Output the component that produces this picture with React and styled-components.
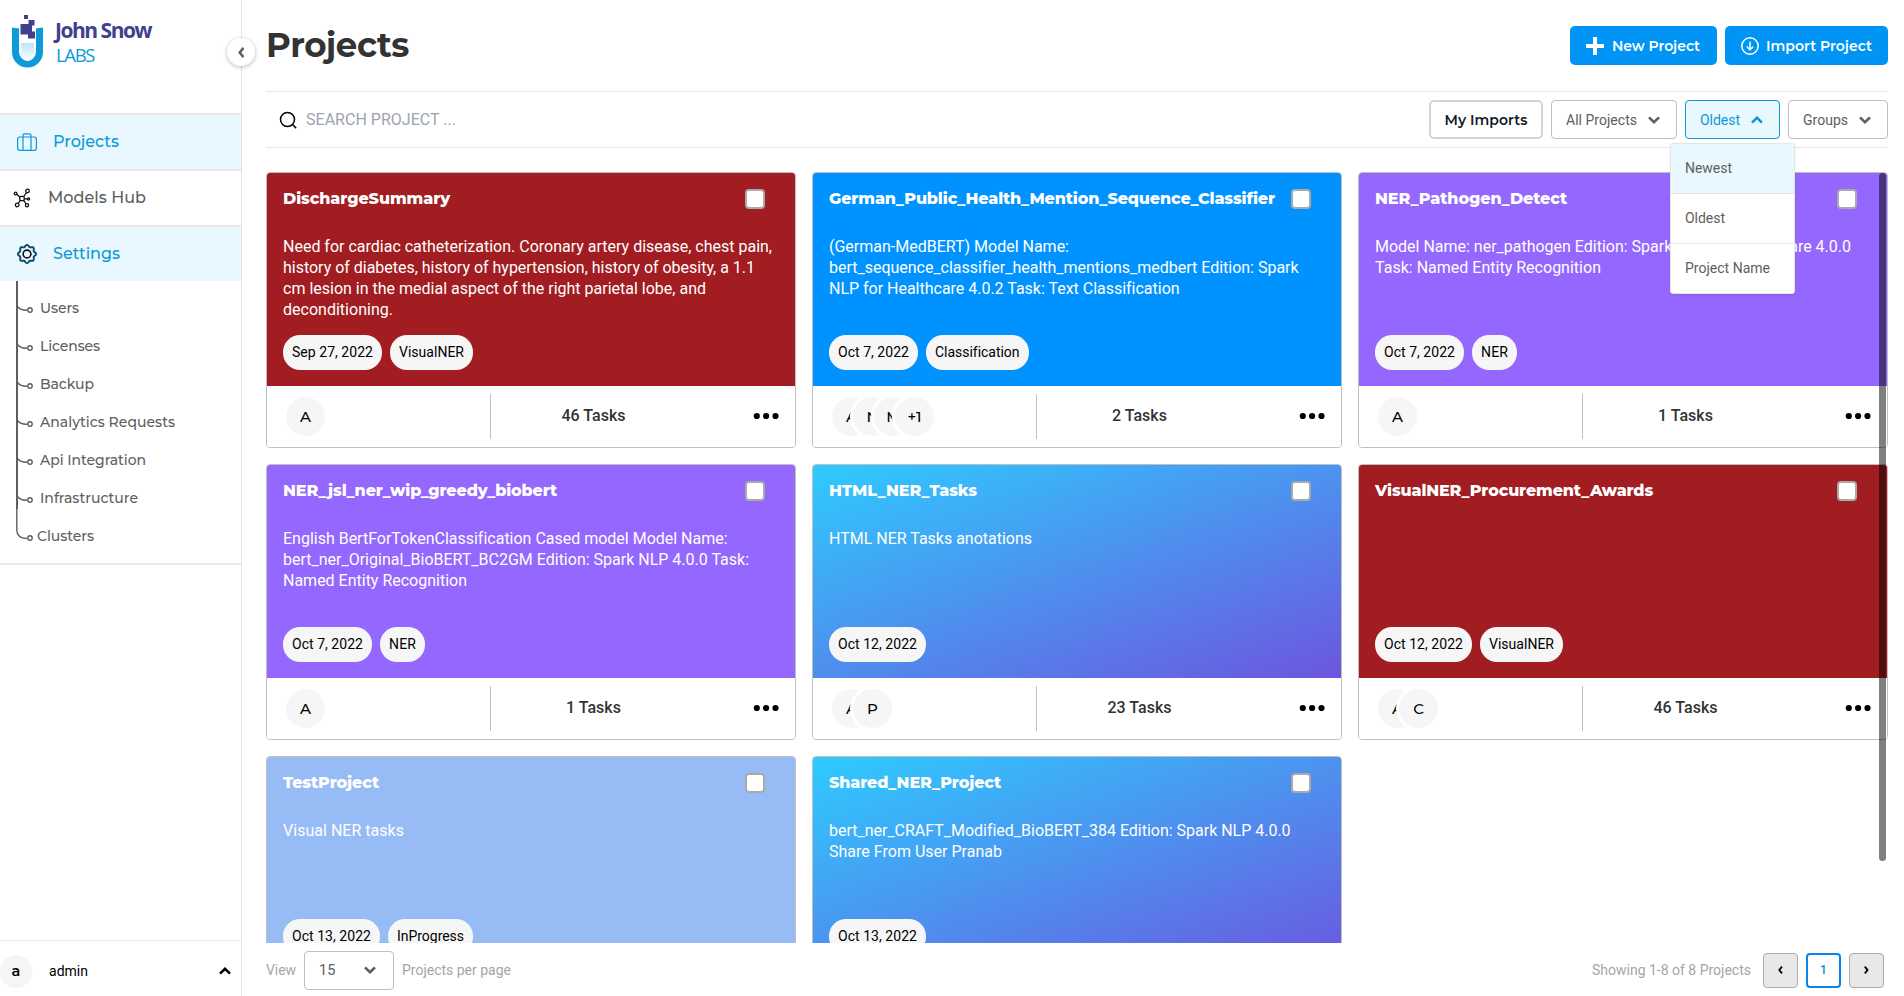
import React from "react";
import styled, { createGlobalStyle, css } from "styled-components";

const Global = createGlobalStyle`
  *, *::before, *::after { box-sizing: border-box; }
  body { margin: 0; background: #fff; font-family: Roboto, "Liberation Sans", sans-serif; overflow: hidden; }
  button { font: inherit; padding: 0; cursor: pointer; }
`;

const head = css`
  font-family: Montserrat, Inter, "Open Sans", sans-serif;
`;

const Label = ({ children, w, ...rest }) => {
  const ref = React.useRef(null);
  React.useLayoutEffect(() => {
    const el = ref.current;
    if (!w || !el) return;
    const fit = () => {
      el.style.letterSpacing = "0px";
      const n = el.textContent.length;
      el.style.letterSpacing = (w - el.getBoundingClientRect().width) / n + "px";
    };
    fit();
    document.fonts.ready.then(fit);
  }, [w]);
  return <Run ref={ref} {...rest}>{children}</Run>;
};
const Run = styled.span`display: inline-block; white-space: nowrap;`;

const Page = styled.div`display: flex; width: 100vw; height: 996px; overflow: hidden;`;

const Sidebar = styled.aside`
  position: relative; display: flex; flex-direction: column;
  width: 242px; flex: none; border-right: 1px solid #e6e6e6;
`;
const Brand = styled.div`height: 113px; padding: 14px 0 0 11px; display: flex; gap: 11px;`;
const BrandName = styled.div`
  display: flex; flex-direction: column; font-family: "Open Sans", sans-serif; padding-top: 3px;
`;
const BrandTop = styled.div`font-size: 21px; line-height: 26px; font-weight: 700; color: #41408f;`;
const BrandSub = styled.div`font-size: 18.5px; line-height: 24px; margin-left: 1px; color: #0e9ad9;`;
const Collapse = styled.button`
  position: absolute; right: -14px; top: 38px; width: 28px; height: 28px; border: 0; border-radius: 50%;
  background: #fff; box-shadow: 0 1px 4px rgba(0,0,0,.28); display: grid; place-items: center; z-index: 3;
`;
const NavItem = styled.a`
  ${head}
  height: 56px; border-top: 2px solid #e8e8e8; display: flex; align-items: center;
  padding-left: ${p => (p.$active ? 17 : 13)}px; gap: ${p => (p.$active ? 16 : 17)}px;
  background: ${p => (p.$active ? "#e9f8ff" : "#fff")};
  color: ${p => (p.$active ? "#0998d8" : "#5e5e5e")};
  font-size: 16px; font-weight: 500;
  svg { flex: none; }
  span { padding-bottom: 2px; }
`;
const SubNav = styled.ul`
  list-style: none; margin: 0; padding: 8px 0; border-bottom: 2px solid #e8e8e8; height: 284px; position: relative;
`;
const SubItem = styled.li`
  ${head}
  height: 38px; display: flex; align-items: center; padding-left: ${p => (p.$last ? 37 : 40)}px; padding-bottom: 1px;
  font-size: 14px; font-weight: 500; color: #5e5e5e;
`;
const Tree = styled.svg`position: absolute; left: 0; top: 0;`;
const User = styled.div`
  margin-top: auto; height: 56px; border-top: 1px solid #e6e6e6; display: flex; align-items: center;
  padding: 5px 10px 0 0; font-size: 14px;
`;
const UserBadge = styled.div`
  ${head}
  width: 32px; height: 33px; border-radius: 50%; background: #f5f5f5;
  display: grid; place-items: center; font-size: 14.5px; font-weight: 600; margin-right: 17px;
`;
const Spacer = styled.div`flex: 1;`;

const Main = styled.main`flex: 1; min-width: 0; padding: 0 16px 0 24px; display: flex; flex-direction: column;`;
const Header = styled.header`height: 91px; display: flex; align-items: center; gap: 8px;`;
const Title = styled.h1`
  ${head}
  margin: 0 auto 0 0; padding-bottom: 2px; font-size: 34px; line-height: 40px; font-weight: 700; color: #333;
`;
const Primary = styled.button`
  ${head}
  width: ${p => p.$w}px; height: 39px; border: 0; border-radius: 5px; background: #0094f5; color: #fff;
  font-size: 14px; font-weight: 600; display: flex; align-items: center; padding-left: 16px; gap: ${p => p.$gap}px;
`;
const Toolbar = styled.div`
  height: 57px; border-top: 1px solid #e6e6e6; border-bottom: 1px solid #e6e6e6;
  display: flex; align-items: center; gap: 8px;
`;
const Search = styled.div`
  flex: 1; display: flex; align-items: center; padding-left: 13px; gap: 9px; font-size: 16px; color: #9ca3af;
`;
const Outline = styled.button`
  ${head}
  width: 114px; height: 39px; border: 2px solid #d1d5db; border-radius: 5px; background: #fff;
  font-size: 14px; font-weight: 600; color: #111827;
`;
const FilterWrap = styled.div`position: relative;`;
const Filter = styled.button`
  width: ${p => p.$w}px; height: 39px; border-radius: 4px; display: flex; align-items: center;
  justify-content: space-between; padding: 0 16px 0 14px; font-size: 14px;
  border: 1px solid ${p => (p.$open ? "#0998d8" : "#bfbfbf")};
  background: ${p => (p.$open ? "#e9f8ff" : "#fff")};
  color: ${p => (p.$open ? "#0998d8" : "#5e5e5e")};
`;
const Menu = styled.div`
  position: absolute; top: 43px; left: -15px; width: 125px; background: #fff; border: 1px solid #e6e6e6;
  border-radius: 3px; overflow: hidden; z-index: 5; box-shadow: 0 1px 3px rgba(0,0,0,.08);
`;
const MenuItem = styled.div`
  height: 50px; padding: 0 0 1px 14px; display: flex; align-items: center; font-size: 14px; color: #5e5e5e;
  background: ${p => (p.$hover ? "#e9f8ff" : "#fff")};
  border-bottom: 1px solid #e6e6e6;
  &:last-child { border-bottom: 0; height: 49px; }
`;

const ScrollArea = styled.section`position: relative; margin-top: 24px; height: 771px; overflow: hidden;`;
const Grid = styled.div`display: grid; grid-template-columns: repeat(3, 1fr); gap: 16px;`;
const Thumb = styled.div`
  position: absolute; right: 2px; top: 1px; width: 7px; height: 688px; border-radius: 4px; background: rgba(0,0,0,.5);
`;
const Card = styled.article`
  height: 276px; border: 1px solid #bfbfbf; border-radius: 4px; overflow: hidden; display: flex; flex-direction: column;
`;
const Cover = styled.div`
  height: 213px; background: ${p => p.$bg}; color: #fff; padding: 16px 16px 16px; display: flex; flex-direction: column;
`;
const CoverTop = styled.div`display: flex; justify-content: space-between; height: 20px; align-items: center; padding-right: 14px;`;
const CardTitle = styled.h2`${head} margin: 0; font-size: 16px; line-height: 20px; font-weight: 800;`;
const Check = styled.span`width: 20px; height: 20px; border: 2px solid #aaa; border-radius: 4px; background: #fff;`;
const Desc = styled.div`
  margin-top: 27px; flex: 1; min-height: 0; font-size: 16px; line-height: 21px; display: flex; flex-direction: column; align-items: flex-start;
`;
const Pills = styled.div`display: flex; gap: 8px;`;
const Pill = styled.span`
  height: 35px; border-radius: 17px; background: #f6f6f6; color: #000; padding: 0 9px 1px; font-size: 14px;
  display: flex; align-items: center;
`;
const Foot = styled.div`
  height: 61px; display: flex; align-items: center; padding-right: 16px; background: #fff;
  > svg { margin-bottom: 2px; }
`;
const Team = styled.div`width: 223px; padding-left: 16px; display: flex;`;
const Avatar = styled.span`
  ${head}
  width: 45px; height: 45px; border: 3px solid #fff; border-radius: 50%; background: #f6f6f6;
  display: grid; place-items: center; font-size: 15px; font-weight: 500;
  & + & { margin-left: -24px; }
`;
const Tasks = styled.div`
  flex: 1; height: 45px; border-left: 1px solid #bfbfbf; display: flex; align-items: center; justify-content: center;
  padding: 0 57px 2px 0; font-size: 16px; font-weight: 500; color: #333;
`;

const Pager = styled.footer`height: 53px; padding: 1px 4px 0 0; display: flex; align-items: center; font-size: 14px; color: #a5a5a5;`;
const PageSize = styled.button`
  width: 90px; height: 39px; margin: 0 8px; border: 1px solid #bfbfbf; border-radius: 4px; background: #fff; color: #5e5e5e;
  display: flex; align-items: center; justify-content: space-between; padding: 0 17px 0 14px; font-size: 14.5px;
`;
const Pages = styled.div`display: flex; gap: 8px; margin-left: 12px;`;
const PageBtn = styled.button`
  width: 35px; height: 35px; border-radius: 4px; display: grid; place-items: center;
  border: ${p => (p.$current ? "2px solid #0a84e8" : "1px solid #adadad")};
  background: ${p => (p.$current ? "#fff" : "#e8e8e8")};
  color: #0a84e8; font-size: 12px; font-weight: 500;
`;

const Chevron = ({ up, color = "currentColor" }) => (
  <svg width="12" height="8" viewBox="0 0 12 8" fill="none" stroke={color} strokeWidth="2.6">
    <path d={up ? "M1 6.6 6 1.8l5 4.8" : "M1 1.4 6 6.2l5-4.8"} />
  </svg>
);
const Caret = ({ left, size = 8, color = "#000" }) => (
  <svg width={size * 0.6} height={size} viewBox="0 0 6 10" fill="none" stroke={color} strokeWidth="2.3">
    <path d={left ? "M5 .8 1.6 5 5 9.2" : "M1 .8 4.4 5 1 9.2"} />
  </svg>
);
const Logo = () => (
  <svg width="33" height="56" viewBox="0 0 33 56">
    <defs>
      <linearGradient id="fluid" x1="0" y1="0" x2="0" y2="1">
        <stop offset="0" stopColor="#b8e6fa" /><stop offset="1" stopColor="#fff" />
      </linearGradient>
    </defs>
    <path d="M1 13.500 8 14.500V38a8.500 8.500 0 0 0 17 0V14.500l7-1V38a15.500 15.500 0 0 1-31 0Z" fill="#0e9ad9" />
    <path d="M10 29h13v12a6.500 6 0 0 1-13 0Z" fill="url(#fluid)" />
    <g fill="#41408f">
      <rect x="13" y="1" width="4" height="4" />
      <path d="M17.500 6h6v5.500h-2.500v6h3v7h-7v-4H9.500V10h8Z" />
    </g>
  </svg>
);
const CaseIcon = () => (
  <svg width="20" height="18" viewBox="0 0 20 18" fill="none" stroke="#0998d8" strokeWidth="1.200">
    <rect x=".6" y="4" width="18.800" height="13.300" rx="2.200" />
    <path d="M6 17.300V2.500Q6 .8 7.700.8h4.600Q14 .8 14 2.500v14.800" />
  </svg>
);
const HubIcon = () => (
  <svg width="18" height="20" viewBox="0 0 18 20" fill="none" stroke="#111" strokeWidth="1.300">
    <rect x="6.800" y="8.300" width="4.400" height="4.400" rx="1.200" />
    <circle cx="2.600" cy="5.500" r="1.300" /><circle cx="14.500" cy="3" r="1.800" />
    <circle cx="4.200" cy="17" r="1.800" /><circle cx="14" cy="17.200" r="1.600" /><circle cx="15.500" cy="11" r="1.100" />
    <path d="M3.700 6.300 6.900 9M13.500 4.600 10.800 8.500M7.200 12.500 5.200 15.500M10.700 12.500l2.400 3.400M11.200 10.800h3.200" />
  </svg>
);
const gear = Array.from({ length: 64 }, (_, i) => {
  const a = (i / 64) * Math.PI * 2;
  const r = 8.2 + 0.9 * Math.cos(a * 8);
  return (i ? "L" : "M") + (10 + r * Math.sin(a)).toFixed(2) + " " + (10 - r * Math.cos(a)).toFixed(2);
}).join("") + "Z";
const GearIcon = () => (
  <svg width="20" height="20" viewBox="0 0 20 20" fill="none">
    <path d={gear} stroke="#0a4a6c" strokeWidth="1.900" /><circle cx="10" cy="10" r="3.900" stroke="#111" strokeWidth="1.600" />
  </svg>
);
const PlusIcon = () => (
  <svg width="18" height="18" viewBox="0 0 18 18" stroke="#fff" strokeWidth="4"><path d="M9 0v18M0 9h18" /></svg>
);
const ImportIcon = () => (
  <svg width="18" height="18" viewBox="0 0 18 18" fill="none" stroke="#fff" strokeWidth="1.500">
    <circle cx="9" cy="9" r="8.200" /><path d="M9 4.800v8M5.800 9.600 9 12.800l3.200-3.200" />
  </svg>
);
const SearchIcon = () => (
  <svg width="18" height="18" viewBox="0 0 18 18" fill="none" stroke="#000" strokeWidth="1.500">
    <circle cx="8.500" cy="8.500" r="7" /><path d="m13.500 13.500 3.600 3.600" />
  </svg>
);
const Dots = () => (
  <svg width="26" height="8" viewBox="0 0 26 8"><circle cx="3.800" cy="4" r="3.100" /><circle cx="13.100" cy="4" r="3.100" /><circle cx="22.500" cy="4" r="3.100" /></svg>
);

const RED = "#a11d21", BLUE = "#0093ff", VIOLET = "#9467fe", PALE = "#97bbf4";
const FADE = "linear-gradient(160deg, #2ecbff 0%, #6c56de 100%)";

const projects = [
  { name: "DischargeSummary", w: 167, bg: RED, tags: [["Sep 27, 2022", 81], ["VisualNER", 65]], team: ["A"], tasks: 46,
    text: [["Need for cardiac catheterization. Coronary artery disease, chest pain,", 489], ["history of diabetes, history of hypertension, history of obesity, a 1.1", 472], ["cm lesion in the medial aspect of the right parietal lobe, and", 423], ["deconditioning.", 110]] },
  { name: "German_Public_Health_Mention_Sequence_Classifier", w: 446, bg: BLUE, tags: [["Oct 7, 2022", 71], ["Classification", 84]], team: ["A", "N", "M", "+1"], tasks: 2,
    text: [["(German-MedBERT) Model Name:", 240], ["bert_sequence_classifier_health_mentions_medbert Edition: Spark", 469], ["NLP for Healthcare 4.0.2 Task: Text Classification", 350]] },
  { name: "NER_Pathogen_Detect", w: 192, bg: VIOLET, tags: [["Oct 7, 2022", 71], ["NER", 27]], team: ["A"], tasks: 1,
    text: [["Model Name: ner_pathogen Edition: Spark NLP for Healthcare 4.0.0", 476], ["Task: Named Entity Recognition", 226]] },
  { name: "NER_jsl_ner_wip_greedy_biobert", w: 274, bg: VIOLET, tags: [["Oct 7, 2022", 71], ["NER", 27]], team: ["A"], tasks: 1,
    text: [["English BertForTokenClassification Cased model Model Name:", 444], ["bert_ner_Original_BioBERT_BC2GM Edition: Spark NLP 4.0.0 Task:", 466], ["Named Entity Recognition", 184]] },
  { name: "HTML_NER_Tasks", w: 148, bg: FADE, tags: [["Oct 12, 2022", 79]], team: ["A", "P"], tasks: 23, text: [["HTML NER Tasks anotations", 203]] },
  { name: "VisualNER_Procurement_Awards", w: 278, bg: RED, tags: [["Oct 12, 2022", 79], ["VisualNER", 65]], team: ["A", "C"], tasks: 46, text: [] },
  { name: "TestProject", w: 96, bg: PALE, tags: [["Oct 13, 2022", 79], ["InProgress", 67]], team: ["A"], tasks: 1, text: [["Visual NER tasks", 121]] },
  { name: "Shared_NER_Project", w: 172, bg: FADE, tags: [["Oct 13, 2022", 79]], team: ["A"], tasks: 1,
    text: [["bert_ner_CRAFT_Modified_BioBERT_384 Edition: Spark NLP 4.0.0", 461], ["Share From User Pranab", 173]] },
];
const settings = [["Users", 39], ["Licenses", 60], ["Backup", 54], ["Analytics Requests", 135], ["Api Integration", 106], ["Infrastructure", 98], ["Clusters", 57]];

const ProjectCard = ({ p }) => (
  <Card>
    <Cover $bg={p.bg}>
      <CoverTop><CardTitle><Label w={p.w}>{p.name}</Label></CardTitle><Check /></CoverTop>
      <Desc>{p.text.map(([t, w]) => <Label key={t} w={w}>{t}</Label>)}</Desc>
      <Pills>{p.tags.map(([t, w]) => <Pill key={t}><Label w={w}>{t}</Label></Pill>)}</Pills>
    </Cover>
    <Foot>
      <Team>{p.team.map((m, i) => <Avatar key={i}>{m}</Avatar>)}</Team>
      <Tasks>{p.tasks} Tasks</Tasks>
      <Dots />
    </Foot>
  </Card>
);

export default function App() {
  return (
    <>
      <Global />
      <Page>
        <Sidebar>
          <Brand>
            <Logo />
            <BrandName>
              <BrandTop><Label w={96}>John Snow</Label></BrandTop>
              <BrandSub><Label w={38}>LABS</Label></BrandSub>
            </BrandName>
          </Brand>
          <Collapse><Caret left size={11} color="#5e5e5e" /></Collapse>
          <NavItem $active><CaseIcon /><Label w={66}>Projects</Label></NavItem>
          <NavItem><HubIcon /><Label w={98}>Models Hub</Label></NavItem>
          <NavItem $active><GearIcon /><Label w={67}>Settings</Label></NavItem>
          <SubNav>
            <Tree width="36" height="270" viewBox="0 0 36 270" fill="none" stroke="#5e5e5e">
              <path d="M17 0v228" strokeWidth="2" />
              <path d="M16.800 226v23q0 8 10 8.500" strokeWidth="1.400" />
              {settings.map(([t], i) => (
                <g key={t} strokeWidth="1.400">
                  {i < 6 && <path d={`M17.500 ${25.5 + i * 38}q3 4 9.500 3.800`} />}
                  <circle cx="30" cy={29 + i * 38} r="2.200" />
                </g>
              ))}
            </Tree>
            {settings.map(([t, w], i) => <SubItem key={t} $last={i === 6}><Label w={w}>{t}</Label></SubItem>)}
          </SubNav>
          <User>
            <UserBadge>a</UserBadge><Label w={39}>admin</Label><Spacer /><Chevron up color="#000" />
          </User>
        </Sidebar>
        <Main>
          <Header>
            <Title><Label w={143}>Projects</Label></Title>
            <Primary $w={147} $gap={8}><PlusIcon /><Label w={88}>New Project</Label></Primary>
            <Primary $w={163} $gap={7}><ImportIcon /><Label w={106}>Import Project</Label></Primary>
          </Header>
          <Toolbar>
            <Search><SearchIcon /><Label w={150}>SEARCH PROJECT ...</Label></Search>
            <Outline><Label w={83}>My Imports</Label></Outline>
            <Filter $w={126}><Label w={71}>All Projects</Label><Chevron /></Filter>
            <FilterWrap>
              <Filter $w={95} $open><Label w={40}>Oldest</Label><Chevron up /></Filter>
              <Menu>
                <MenuItem $hover><Label w={47}>Newest</Label></MenuItem>
                <MenuItem><Label w={40}>Oldest</Label></MenuItem>
                <MenuItem><Label w={85}>Project Name</Label></MenuItem>
              </Menu>
            </FilterWrap>
            <Filter $w={100}><Label w={45}>Groups</Label><Chevron /></Filter>
          </Toolbar>
          <ScrollArea>
            <Grid>{projects.map(p => <ProjectCard key={p.name} p={p} />)}</Grid>
            <Thumb />
          </ScrollArea>
          <Pager>
            <Label w={30}>View</Label>
            <PageSize>15<Chevron /></PageSize>
            <Label w={109}>Projects per page</Label>
            <Spacer />
            <Label w={159}>Showing 1-8 of 8 Projects</Label>
            <Pages>
              <PageBtn><Caret left /></PageBtn>
              <PageBtn $current>1</PageBtn>
              <PageBtn><Caret /></PageBtn>
            </Pages>
          </Pager>
        </Main>
      </Page>
    </>
  );
}
